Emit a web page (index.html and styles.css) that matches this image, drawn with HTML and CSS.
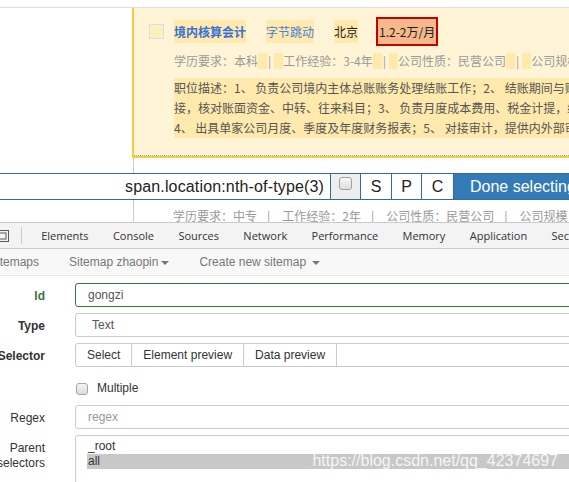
FILE: index.html
```html
<!DOCTYPE html>
<html>
<head>
<meta charset="utf-8">
<link rel="stylesheet" href="styles.css">
</head>
<body>
<div class="page">
  <div class="site-top"></div>
  <div class="list">
    <div class="card">
      <div class="card-inner">
        <div class="title-row">
          <span class="cb"></span>
          <span class="hl title">境内核算会计</span>
          <span class="hl company">字节跳动</span>
          <span class="hl city">北京</span>
          <span class="salary">1.2-2万/月</span>
        </div>
        <div class="meta indent">
          <span>学历要求：本科</span><span class="sep"><span class="pad"></span>|<span class="pad"></span></span><span>工作经验：3-4年</span><span class="sep"><span class="pad"></span>|<span class="pad"></span></span><span>公司性质：民营公司</span><span class="sep"><span class="pad"></span>|<span class="pad"></span></span><span>公司规模：10000人以上</span>
        </div>
        <div class="desc indent">
          <div class="line">职位描述：1、 负责公司境内主体总账账务处理结账工作；2、 结账期间与财务共享中心对</div>
          <div class="line">接，核对账面资金、中转、往来科目；3、 负责月度成本费用、税金计提，编制</div>
          <div class="line">4、 出具单家公司月度、季度及年度财务报表；5、 对接审计，提供内外部审计所需资料</div>
        </div>
      </div>
    </div>
    <div class="list-gap"></div>
  </div>
  <div class="sel-bar">
    <div class="sel-input">span.location:nth-of-type(3)</div>
    <div class="sel-cell cb-cell"><span class="chk"></span></div>
    <div class="sel-cell s">S</div>
    <div class="sel-cell p">P</div>
    <div class="sel-cell c">C</div>
    <div class="done">Done selecting</div>
  </div>
  <div class="list next">
    <div class="meta plain">
      <span>学历要求：中专</span><span class="sep"><span class="pad"></span>|<span class="pad"></span></span><span>工作经验：2年</span><span class="sep"><span class="pad"></span>|<span class="pad"></span></span><span>公司性质：民营公司</span><span class="sep"><span class="pad"></span>|<span class="pad"></span></span><span>公司规模：100-499人</span>
    </div>
  </div>

  <div class="devtools">
    <div class="tabs">
      <span class="dev-icon"><svg width="14" height="13" viewBox="0 0 14 13"><rect x="0.5" y="0.5" width="12" height="11" fill="none" stroke="#5a5a5a"/><rect x="3" y="3" width="7" height="6" fill="none" stroke="#5a5a5a"/></svg></span>
      <span class="tab-sep"></span>
      <span class="tab">Elements</span>
      <span class="tab">Console</span>
      <span class="tab">Sources</span>
      <span class="tab">Network</span>
      <span class="tab">Performance</span>
      <span class="tab">Memory</span>
      <span class="tab">Application</span>
      <span class="tab">Security</span>
    </div>
    <div class="navbar">
      <span class="nav-link">Sitemaps</span>
      <span class="nav-link">Sitemap zhaopin<span class="caret"></span></span>
      <span class="nav-link">Create new sitemap <span class="caret"></span></span>
    </div>
    <div class="form">
      <div class="row">
        <div class="label bold green">Id</div>
        <div class="field"><div class="input success">gongzi</div></div>
      </div>
      <div class="row">
        <div class="label bold">Type</div>
        <div class="field"><div class="input select">Text</div></div>
      </div>
      <div class="row">
        <div class="label bold">Selector</div>
        <div class="field group">
          <span class="btn first">Select</span>
          <span class="btn">Element preview</span>
          <span class="btn">Data preview</span>
          <span class="input grow"></span>
        </div>
      </div>
      <div class="row check-row">
        <div class="label"></div>
        <div class="field check"><span class="checkbox"></span><span class="check-label">Multiple</span></div>
      </div>
      <div class="row">
        <div class="label">Regex</div>
        <div class="field"><div class="input placeholder">regex</div></div>
      </div>
      <div class="row">
        <div class="label">Parent selectors</div>
        <div class="field">
          <div class="multi">
            <div class="opt">_root</div>
            <div class="opt selected">all</div>
          </div>
        </div>
      </div>
    </div>
  </div>
  <div class="watermark">https://blog.csdn.net/qq_42374697</div>
</div>
</body>
</html>
```

FILE: styles.css
```css
html, body {
  margin: 0;
  padding: 0;
  background: #fff;
}
.page {
  position: relative;
  width: 569px;
  height: 482px;
  overflow: hidden;
  background: #fff;
  font-family: "Noto Sans CJK SC", "Liberation Sans", sans-serif;
  font-size: 12px;
}
.site-top {
  height: 7px;
  border-bottom: 1px solid #dddddd;
}
.list {
  margin-left: 133px;
  border-left: 1px solid #cccccc;
}
.card {
  margin-left: -2px;
  border-left: 2px solid #fcc83c;
  border-bottom: 2px solid #fcc83c;
  background: #fff4d6;
}
.card-inner {
  padding: 9px 0 17px 15px;
  border-bottom: 1px dotted #a8a8a8;
}
.title-row {
  display: flex;
  align-items: center;
  height: 29px;
  white-space: nowrap;
}
.cb {
  width: 15px;
  height: 15px;
  box-sizing: border-box;
  border: 1px solid #dedede;
  background: #ffefba;
  margin-right: 10px;
  flex: none;
}
.hl {
  background: #ffe9ad;
  line-height: 23px;
  margin-right: 20px;
  flex: none;
}
.title {
  font-weight: bold;
  color: #3770d6;
}
.company {
  color: #467ddc;
}
.city {
  color: #1e1e1e;
  margin-right: 18px;
}
.salary {
  flex: none;
  border: 2px solid #c40000;
  background: #f5b88b;
  line-height: 25px;
  padding: 0 1px;
  color: #1e1e1e;
}
.indent {
  margin-left: 25px;
}
.meta {
  margin-top: 7px;
  line-height: 16px;
  height: 16px;
  color: #9a9a9a;
  white-space: nowrap;
  overflow: hidden;
}
.sep .pad {
  display: inline-block;
  width: 9px;
  height: 16px;
  vertical-align: top;
  background: #ffe9ad;
}
.sep .pad:first-child {
  margin-right: 1px;
}
.sep .pad:last-child {
  margin-left: 3px;
}
.meta.plain .sep .pad {
  background: transparent;
}
.desc {
  margin-top: 9px;
  background: #ffe9ad;
  color: #555555;
  line-height: 20px;
  white-space: nowrap;
  overflow: hidden;
}
.list-gap {
  height: 15px;
}
.sel-bar {
  display: flex;
  height: 25px;
  border-top: 1px solid #2e6da4;
  border-bottom: 1px solid #2e6da4;
  font-family: "Liberation Sans", Arial, sans-serif;
  font-size: 16px;
  line-height: 25px;
  color: #222;
  white-space: nowrap;
}
.sel-input {
  flex: none;
  width: 324px;
  padding-right: 6px;
  text-align: right;
  background: #fff;
  letter-spacing: 0.15px;
}
.sel-cell {
  flex: none;
  border-left: 1px solid #2e6da4;
  text-align: center;
  background: #fff;
}
.cb-cell {
  width: 30px;
  background: #eeeeee;
  display: flex;
  justify-content: center;
  padding-top: 2px;
  box-sizing: border-box;
}
.chk {
  width: 13px;
  height: 13px;
  box-sizing: border-box;
  border: 1px solid #a0a0a0;
  border-radius: 3px;
  background: linear-gradient(#f6f6f6, #dedede);
  margin-top: 1px;
}
.s { width: 30px; }
.p { width: 29px; }
.c { width: 31px; }
.done {
  flex: none;
  border-left: 1px solid #2e6da4;
  background: #337ab7;
  color: #fff;
  padding: 0 16px;
}
.next {
  height: 22px;
  overflow: hidden;
}
.next .meta {
  margin-top: 8px;
  margin-left: 39px;
}
.devtools {
  border-top: 1px solid #cacaca;
}
.tabs {
  display: flex;
  align-items: center;
  height: 25px;
  background: #f3f3f3;
  border-bottom: 1px solid #cccccc;
  font-family: "Open Sans", sans-serif;
  font-size: 11px;
  color: #333;
  white-space: nowrap;
}
.dev-icon {
  flex: none;
  margin-left: -4px;
  display: flex;
  margin-top: 1px;
}
.tab-sep {
  flex: none;
  width: 1px;
  height: 17px;
  background: #cccccc;
  margin-left: 11px;
  margin-right: 7px;
}
.tab {
  flex: none;
  padding: 0 12.2px;
}
.tab:first-of-type {
  padding-left: 11.6px;
}
.navbar {
  display: flex;
  align-items: center;
  height: 26px;
  background: #f8f8f8;
  border-bottom: 1px solid #e7e7e7;
  margin-left: -26px;
  font-family: "Liberation Sans", Arial, sans-serif;
  font-size: 12px;
  color: #777;
  white-space: nowrap;
}
.nav-link {
  flex: none;
  padding: 0 15px;
}
.caret {
  display: inline-block;
  width: 0;
  height: 0;
  margin-left: 3px;
  vertical-align: middle;
  border-top: 4px solid #777;
  border-left: 4px solid transparent;
  border-right: 4px solid transparent;
}
.form {
  margin-left: -30px;
  width: 720px;
  padding-top: 7px;
  font-family: "Liberation Sans", Arial, sans-serif;
  font-size: 12px;
  color: #333;
}
.row {
  display: flex;
  margin-bottom: 6px;
}
.label {
  flex: none;
  width: 60px;
  padding: 6px 15px 0 15px;
  text-align: right;
  line-height: 15px;
}
.bold {
  font-weight: bold;
}
.green {
  color: #3c763d;
}
.field {
  flex: 1;
  padding-left: 15px;
}
.input {
  box-sizing: border-box;
  height: 24px;
  border: 1px solid #cccccc;
  border-radius: 3px;
  padding: 0 12px;
  line-height: 22px;
  color: #555;
}
.input.success {
  border-color: #3c763d;
}
.input.select {
  padding-left: 16px;
}
.input.placeholder {
  color: #999;
}
.group {
  display: flex;
}
.btn {
  box-sizing: border-box;
  height: 24px;
  border: 1px solid #cccccc;
  padding: 0 11px;
  line-height: 22px;
  color: #333;
  background: #fff;
  margin-right: -1px;
  white-space: nowrap;
}
.btn.first {
  border-radius: 3px 0 0 3px;
}
.input.grow {
  flex: 1;
  border-radius: 0 3px 3px 0;
}
.check-row {
  height: 26px;
}
.check {
  display: flex;
  align-items: center;
  padding-left: 16px;
  padding-top: 3px;
}
.checkbox {
  width: 12px;
  height: 12px;
  box-sizing: border-box;
  border: 1px solid #a6a6a6;
  border-radius: 3px;
  background: linear-gradient(#f4f4f4, #dcdcdc);
  margin-right: 9px;
  margin-top: 3px;
}
.check-label {
  color: #333;
}
.multi {
  box-sizing: border-box;
  height: 80px;
  border: 1px solid #cccccc;
  border-radius: 3px;
  padding: 3px 0 0 11px;
  line-height: 15px;
  color: #333;
}
.opt {
  padding-left: 1px;
}
.opt.selected {
  background: #c8c8c8;
}
.watermark {
  position: absolute;
  right: 11px;
  top: 451px;
  font-family: "Liberation Sans", Arial, sans-serif;
  font-size: 16px;
  line-height: 20px;
  color: rgba(255, 255, 255, 0.85);
  white-space: nowrap;
}
```
